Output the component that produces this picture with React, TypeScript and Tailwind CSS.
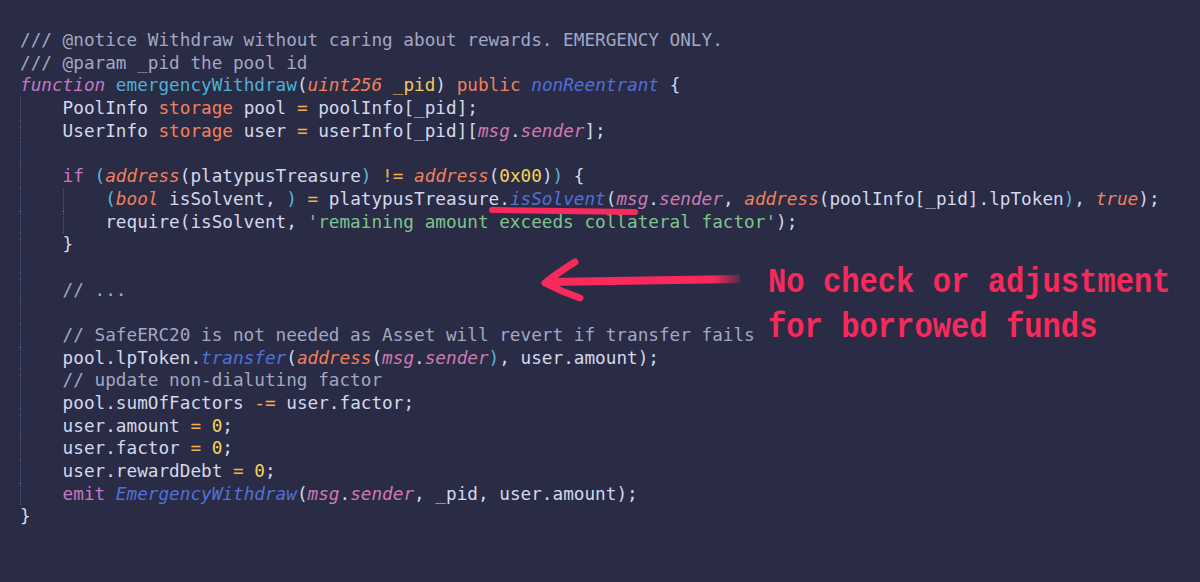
import React from "react";

const P = "text-[#d4d8ee]";
const CM = "text-[#a2a7c4]";
const KW = "text-[#c678c4]";
const KWI = "text-[#c678c4] italic";
const FN = "text-[#4fb0d6]";
const TY = "text-[#f3805c] italic";
const ST = "text-[#f3805c]";
const PA = "text-[#f5c85a]";
const BL = "text-[#5270dc] italic";
const MS = "text-[#d07ab4] italic";
const OP = "text-[#f2b04a]";
const NU = "text-[#f5d45a]";
const CY = "text-[#5cb7d9]";
const SG = "text-[#7fc48f]";

type Tok = [string, string];
type Line = { g: number; t: Tok[] };

const lines: Line[] = [
  { g: 0, t: [["/// @notice Withdraw without caring about rewards. EMERGENCY ONLY.", CM]] },
  { g: 0, t: [["/// @param _pid the pool id", CM]] },
  {
    g: 0,
    t: [
      ["function", KWI],
      [" ", P],
      ["emergencyWithdraw", FN],
      ["(", P],
      ["uint256", TY],
      [" ", P],
      ["_pid", PA],
      [") ", P],
      ["public", ST],
      [" ", P],
      ["nonReentrant", BL],
      [" {", P],
    ],
  },
  {
    g: 1,
    t: [
      ["PoolInfo ", P],
      ["storage", ST],
      [" pool ", P],
      ["=", OP],
      [" poolInfo[_pid];", P],
    ],
  },
  {
    g: 1,
    t: [
      ["UserInfo ", P],
      ["storage", ST],
      [" user ", P],
      ["=", OP],
      [" userInfo[_pid][", P],
      ["msg", MS],
      [".", P],
      ["sender", MS],
      ["];", P],
    ],
  },
  { g: 1, t: [] },
  {
    g: 1,
    t: [
      ["if", KW],
      [" ", P],
      ["(", CY],
      ["address", TY],
      ["(platypusTreasure", P],
      [")", CY],
      [" ", P],
      ["!=", OP],
      [" ", P],
      ["address", TY],
      ["(", P],
      ["0x00", NU],
      [")", P],
      [")", CY],
      [" {", P],
    ],
  },
  {
    g: 2,
    t: [
      ["(", CY],
      ["bool", TY],
      [" isSolvent, ", P],
      [")", CY],
      [" ", P],
      ["=", OP],
      [" platypusTreasure.", P],
      ["isSolvent", BL],
      ["(", P],
      ["msg", MS],
      [".", P],
      ["sender", MS],
      [", ", P],
      ["address", TY],
      ["(poolInfo[_pid].lpToken", P],
      [")", CY],
      [", ", P],
      ["true", TY],
      [");", P],
    ],
  },
  {
    g: 2,
    t: [
      ["require(isSolvent, ", P],
      ["'remaining amount exceeds collateral factor'", SG],
      [");", P],
    ],
  },
  { g: 1, t: [["}", P]] },
  { g: 1, t: [] },
  { g: 1, t: [["// ...", CM]] },
  { g: 1, t: [] },
  { g: 1, t: [["// SafeERC20 is not needed as Asset will revert if transfer fails", CM]] },
  {
    g: 1,
    t: [
      ["pool.lpToken.", P],
      ["transfer", BL],
      ["(", P],
      ["address", TY],
      ["(", P],
      ["msg", MS],
      [".", P],
      ["sender", MS],
      [")", CY],
      [", user.amount);", P],
    ],
  },
  { g: 1, t: [["// update non-dialuting factor", CM]] },
  {
    g: 1,
    t: [
      ["pool.sumOfFactors ", P],
      ["-=", OP],
      [" user.factor;", P],
    ],
  },
  {
    g: 1,
    t: [
      ["user.amount ", P],
      ["=", OP],
      [" ", P],
      ["0", NU],
      [";", P],
    ],
  },
  {
    g: 1,
    t: [
      ["user.factor ", P],
      ["=", OP],
      [" ", P],
      ["0", NU],
      [";", P],
    ],
  },
  {
    g: 1,
    t: [
      ["user.rewardDebt ", P],
      ["=", OP],
      [" ", P],
      ["0", NU],
      [";", P],
    ],
  },
  {
    g: 1,
    t: [
      ["emit", KW],
      [" ", P],
      ["EmergencyWithdraw", BL],
      ["(", P],
      ["msg", MS],
      [".", P],
      ["sender", MS],
      [", _pid, user.amount);", P],
    ],
  },
  { g: 0, t: [["}", P]] },
];

function CodeLine({ line }: { line: Line }) {
  const guides = [];
  for (let i = 0; i < line.g; i++) {
    guides.push(
      <span
        key={i}
        className="inline-block w-[4ch] h-[22.7px] border-l border-dotted border-[#555a80] shrink-0"
      />
    );
  }
  return (
    <div className="flex h-[22.7px] items-center whitespace-pre">
      {guides}
      <span>
        {line.t.map((tk, i) => (
          <span key={i} className={tk[1]}>
            {tk[0]}
          </span>
        ))}
      </span>
    </div>
  );
}

export default function App() {
  return (
    <div className="relative w-[1200px] h-[582px] overflow-hidden bg-[#292c44]">
      <div className="pl-[20px] pt-[29px] font-['DejaVu_Sans_Mono',monospace] text-[17.7px] leading-[22.7px]">
        {lines.map((l, i) => (
          <CodeLine key={i} line={l} />
        ))}
      </div>

      <svg
        className="absolute left-0 top-0 pointer-events-none"
        width="1200"
        height="582"
        viewBox="0 0 1200 582"
      >
        <defs>
          <linearGradient id="fade" x1="540" y1="0" x2="742" y2="0" gradientUnits="userSpaceOnUse">
            <stop offset="0" stopColor="#f72a5b" stopOpacity="1" />
            <stop offset="0.86" stopColor="#f72a5b" stopOpacity="1" />
            <stop offset="1" stopColor="#f72a5b" stopOpacity="0.15" />
          </linearGradient>
        </defs>
        <path d="M 492 210 Q 560 211 635 212" stroke="#f72a5b" strokeWidth="6" strokeLinecap="round" fill="none" />
        <path d="M 548 282 L 740 279" stroke="url(#fade)" strokeWidth="8" strokeLinecap="butt" fill="none" />
        <path
          d="M 575 262 Q 556 274 545 283 Q 562 292 580 298"
          stroke="#f72a5b"
          strokeWidth="7"
          strokeLinecap="round"
          strokeLinejoin="round"
          fill="none"
        />
      </svg>

      <div className="absolute left-[768px] top-[261px] font-['Liberation_Mono',monospace] font-bold text-[30.5px] leading-[39px] text-[#f72a5b] whitespace-pre origin-top-left scale-y-[1.15]">
        <div>No check or adjustment</div>
        <div>for borrowed funds</div>
      </div>
    </div>
  );
}
